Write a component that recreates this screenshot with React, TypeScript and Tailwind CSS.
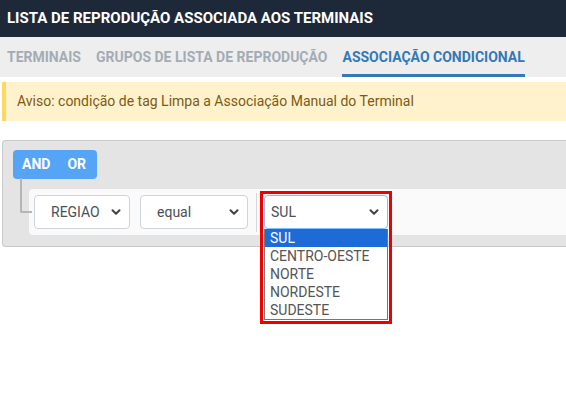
import { ChevronDown } from 'lucide-react'

const regions = ['SUL', 'CENTRO-OESTE', 'NORTE', 'NORDESTE', 'SUDESTE']

function FakeSelect({
  value,
  width,
  pad,
  focused = false,
}: {
  value: string
  width: string
  pad: string
  focused?: boolean
}) {
  return (
    <div
      className={`flex h-[34px] items-center justify-between rounded-[4px] border bg-white pr-[6px] ${width} ${pad} ${
        focused ? 'border-[#80bdff]' : 'border-[#cfd4da]'
      }`}
    >
      <span className="text-[14px] text-[#495057]">{value}</span>
      <ChevronDown className="h-[14px] w-[14px] text-[#444]" strokeWidth={3.5} />
    </div>
  )
}

export default function App() {
  return (
    <div className="h-[411px] w-[566px] overflow-hidden bg-white font-['Roboto',sans-serif]">
      <div className="flex h-[37px] items-center bg-[#1d2939] px-[7px]">
        <h1 className="text-[15px] font-bold text-white">
          LISTA DE REPRODUÇÃO ASSOCIADA AOS TERMINAIS
        </h1>
      </div>

      <div className="flex h-[40px] items-stretch gap-[15px] bg-[#eeeeee] px-[7px] text-[14px] font-bold">
        <div className="flex items-center text-[#a3acb5]">TERMINAIS</div>
        <div className="flex items-center text-[#a3acb5]">GRUPOS DE LISTA DE REPRODUÇÃO</div>
        <div className="flex items-center border-b-[3px] border-[#3379b7] pt-[3px] text-[#3379b7]">
          ASSOCIAÇÃO CONDICIONAL
        </div>
      </div>

      <div className="ml-[2px] mt-[5px] flex h-[39px] items-center border-l-[4px] border-[#ffd862] bg-[#fff2cc] pl-[11px] text-[14px] text-[#7d5a14]">
        Aviso: condição de tag Limpa a Associação Manual do Terminal
      </div>

      <div className="relative ml-[2px] mt-[19px] h-[107px] rounded-l-[4px] border border-r-0 border-[#c9c9c9] bg-[#e4e4e4] pl-[10px] pt-[9px]">
        <div className="flex h-[29px] w-[84px] items-center gap-[17px] rounded-[4px] bg-[#55a4f5] pl-[9px] text-[14px] font-bold text-white">
          <span>AND</span>
          <span>OR</span>
        </div>

        <div className="absolute left-[17px] top-[37px] h-[35px] w-[12px] rounded-bl-[2px] border-b-2 border-l-2 border-[#b5b5b5]" />

        <div className="ml-[16px] mt-[10px] flex h-[46px] items-center gap-[10px] rounded-l-[4px] bg-[#fafafa] pl-[5px]">
          <FakeSelect value="REGIAO" width="w-[96px]" pad="pl-[16px]" />
          <FakeSelect value="equal" width="w-[108px]" pad="pl-[16px]" />
          <div className="-ml-[2px] h-[39px] w-px bg-[#d6d6d6]" />
        </div>
      </div>

      <div className="absolute left-[260px] top-[191px] h-[133px] w-[132px] border-[3px] border-[#ee0000] bg-transparent p-px">
        <FakeSelect value="SUL" width="w-[124px]" pad="pl-[6px]" focused />
        <div className="w-[124px] border border-t-0 border-[#767676] bg-white text-[14px] leading-[18px] text-[#555]">
          {regions.map((r, i) => (
            <div
              key={r}
              className={`pl-[5px] ${i === 0 ? 'bg-[#1c6bd6] text-white' : ''}`}
            >
              {r}
            </div>
          ))}
        </div>
      </div>
    </div>
  )
}
